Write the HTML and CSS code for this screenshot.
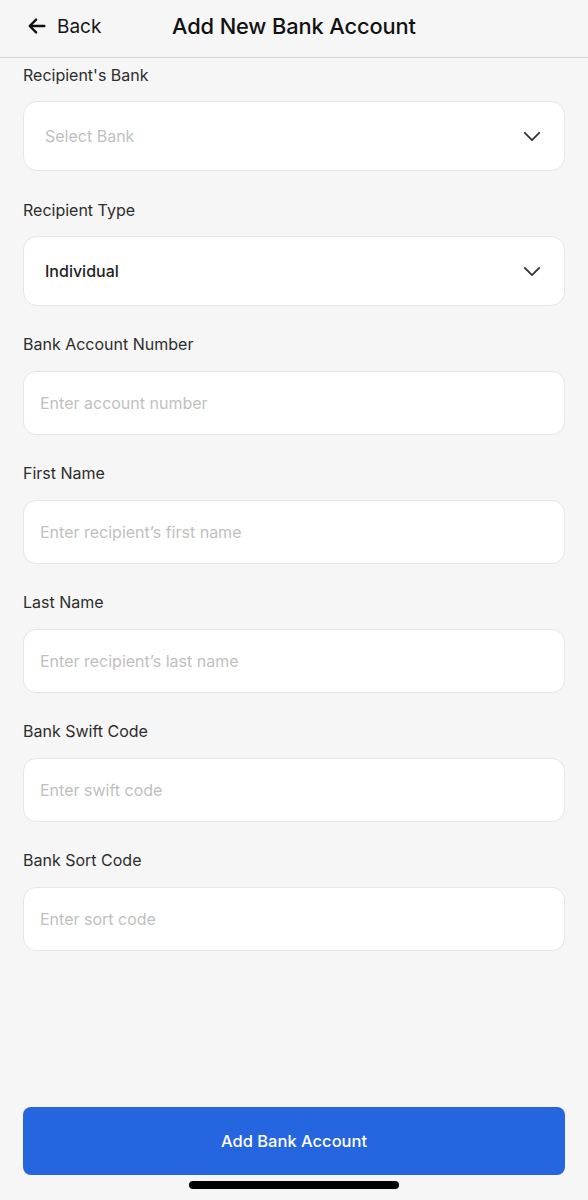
FILE: index.html
```html
<!DOCTYPE html>
<html lang="en">
<head>
<meta charset="utf-8">
<title>Add New Bank Account</title>
<link rel="stylesheet" href="styles.css">
</head>
<body>
<div class="page">
  <header class="topbar">
    <button class="back" type="button">
      <svg class="back-icon" viewBox="0 0 24 24" width="22" height="22" aria-hidden="true">
        <path d="M20 12H5M11 5l-7 7 7 7" fill="none" stroke="#111" stroke-width="2.6" stroke-linecap="round" stroke-linejoin="round"/>
      </svg>
      <span>Back</span>
    </button>
    <h1 class="title">Add New Bank Account</h1>
  </header>

  <main class="form">
    <div class="field field-first">
      <label class="label">Recipient's Bank</label>
      <div class="box box-select">
        <span class="placeholder select-ph">Select Bank</span>
        <svg class="chev" viewBox="0 0 20 12" width="18" height="11" aria-hidden="true"><path d="M2 2l8 8 8-8" fill="none" stroke="#333" stroke-width="2" stroke-linecap="round" stroke-linejoin="round"/></svg>
      </div>
    </div>
    <div class="field">
      <label class="label">Recipient Type</label>
      <div class="box box-select">
        <span class="value">Individual</span>
        <svg class="chev" viewBox="0 0 20 12" width="18" height="11" aria-hidden="true"><path d="M2 2l8 8 8-8" fill="none" stroke="#333" stroke-width="2" stroke-linecap="round" stroke-linejoin="round"/></svg>
      </div>
    </div>
    <div class="field">
      <label class="label">Bank Account Number</label>
      <div class="box box-input"><span class="placeholder">Enter account number</span></div>
    </div>
    <div class="field">
      <label class="label">First Name</label>
      <div class="box box-input"><span class="placeholder">Enter recipient’s first name</span></div>
    </div>
    <div class="field">
      <label class="label">Last Name</label>
      <div class="box box-input"><span class="placeholder">Enter recipient’s last name</span></div>
    </div>
    <div class="field">
      <label class="label">Bank Swift Code</label>
      <div class="box box-input"><span class="placeholder">Enter swift code</span></div>
    </div>
    <div class="field">
      <label class="label">Bank Sort Code</label>
      <div class="box box-input"><span class="placeholder">Enter sort code</span></div>
    </div>
  </main>

  <footer class="footer">
    <button class="submit" type="button">Add Bank Account</button>
    <div class="home-indicator"></div>
  </footer>
</div>
</body>
</html>
```
FILE: styles.css
```css
* { box-sizing: border-box; }
html, body { margin: 0; padding: 0; }
body {
  background: #f6f6f6;
  font-family: Inter, "Noto Sans", "Liberation Sans", sans-serif;
  color: #2b2b2b;
}
.page {
  width: 588px;
  height: 1200px;
  display: flex;
  flex-direction: column;
}
.topbar {
  height: 58px;
  flex: none;
  display: flex;
  align-items: center;
  border-bottom: 1px solid #d6d6d6;
  padding: 0 0 5px 26px;
}
.back {
  display: flex;
  align-items: center;
  gap: 9px;
  background: none;
  border: 0;
  padding: 0;
  font-family: inherit;
  font-size: 19px;
  color: #161616;
  width: 146px;
}
.title {
  margin: 0;
  font-size: 21.8px;
  font-weight: 500;
  color: #111;
  letter-spacing: -0.1px;
}
.form {
  flex: 1;
  padding: 7px 23px 0;
  display: flex;
  flex-direction: column;
  gap: 28px;
}
.field { display: flex; flex-direction: column; }
.field-first { margin-bottom: 1px; }
.label {
  font-size: 16px;
  line-height: 20px;
  color: #2d2d2d;
  margin-bottom: 16px;
}
.box {
  background: #fff;
  border: 1px solid #e6e6e6;
  display: flex;
  align-items: center;
}
.box-select {
  height: 70px;
  border-radius: 14px;
  padding: 0 23px 0 21px;
  justify-content: space-between;
}
.box-input {
  height: 64px;
  border-radius: 13px;
  padding: 0 16px;
  margin-top: 1px;
}
.placeholder { font-size: 16px; color: #bfbfbf; }
.value { font-size: 16px; font-weight: 500; color: #1e1e1e; }
.chev { display: block; }
.footer {
  flex: none;
  padding: 0 23px 11px;
  display: flex;
  flex-direction: column;
  align-items: center;
}
.submit {
  width: 100%;
  height: 68px;
  border: 0;
  border-radius: 8px;
  background: #2566e0;
  color: #fff;
  font-family: inherit;
  font-size: 16.5px;
  font-weight: 500;
}
.home-indicator {
  width: 210px;
  height: 8px;
  border-radius: 4px;
  background: #000;
  margin-top: 6px;
}
```
